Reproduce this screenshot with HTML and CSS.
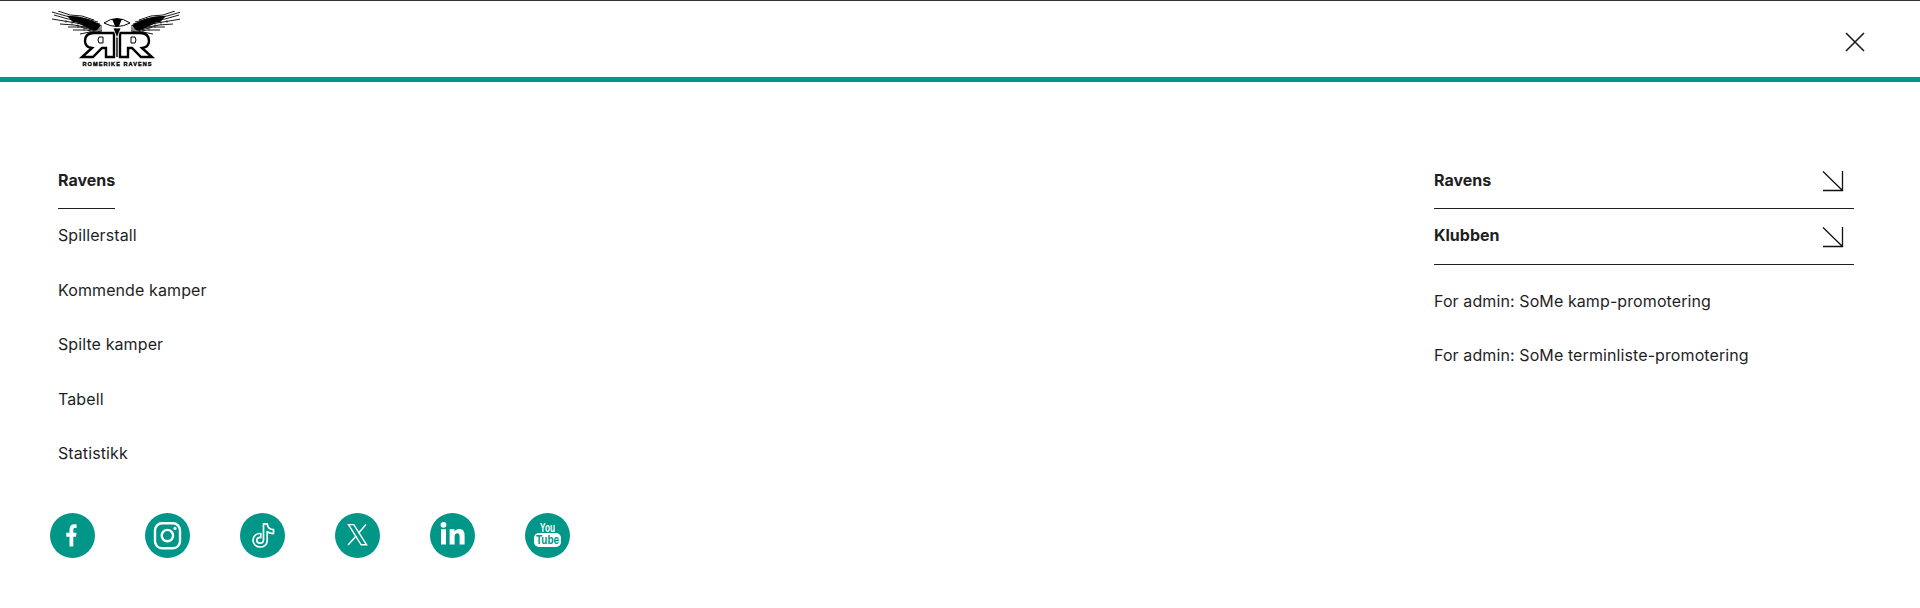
FILE: index.html
```html
<!DOCTYPE html>
<html lang="no">
<head>
<meta charset="utf-8">
<title>Romerike Ravens</title>
<link rel="stylesheet" href="styles.css">
</head>
<body>
<header class="header">
  <a class="logo" href="#" aria-label="Romerike Ravens">
    <svg class="logo-svg" viewBox="0 0 128 56" width="128" height="56" fill="none" stroke="#000">
      <defs>
        <g id="wing">
          <g stroke-width="0.9">
            <path d="M0 1 L14 5 L30 7 L46 11"/>
            <path d="M2 4 L16 8 L34 10 L48 13"/>
            <path d="M0 8 L18 11 L36 14 L50 15"/>
            <path d="M8 13 L22 14 L38 17 L50 17"/>
            <path d="M16 16 L28 16 L40 19 L50 19"/>
            <path d="M21 19 L34 19 L44 21 L50 20"/>
            <path d="M28 23 L38 21 L46 22"/>
            <path d="M33 26 L40 23 L48 23"/>
            <path d="M6 0 L18 4 L30 5 L42 9"/>
            <path d="M14 9 L14 12 M20 8 L20 14 M26 10 L26 17 M32 11 L32 20 M38 14 L38 22 M44 16 L44 22" stroke-width="0.6"/>
          </g>
          <path d="M15 5 Q32 4 49 14 L46 18 Q30 12 21 11 Z" fill="#000" stroke="none"/>
          <path d="M25 12 Q38 13 47 18 L42 20 Q34 16 25 12 Z" fill="#000" stroke="none"/>
        </g>
      </defs>
      <use href="#wing"/>
      <use href="#wing" transform="translate(129 0) scale(-1 1)"/>
      <path d="M52 12 Q65 3 78 12 Q65 19 52 12 Z" stroke-width="1"/>
      <path d="M60 8 L70 8 L67 15 L63 15 Z" fill="#000" stroke="none"/>
      <path class="letter" d="M62 46 L62 22 L42 22 Q33 22 33 30 Q33 36 40 37 L30 46 L41 46 L50 37 L54 37 L54 46 Z" fill="#fff" stroke-width="2.4"/>
      <path class="letter" d="M68 46 L68 22 L88 22 Q97 22 97 30 Q97 36 90 37 L100 46 L89 46 L80 37 L76 37 L76 46 Z" fill="#fff" stroke-width="2.4"/>
      <path d="M51 26 L47 26 Q45 29 47 32 L51 32 Z M79 26 L83 26 Q85 29 83 32 L79 32 Z" stroke-width="1"/>
      <path d="M65 22 L65 46" stroke-width="1.4"/>
      <path d="M61 17 L65 27 L69 17 Z" fill="#000" stroke="#fff" stroke-width="0.8"/>
      <text class="logo-text" x="65" y="54.5" text-anchor="middle" textLength="69" lengthAdjust="spacing" fill="#000" stroke="#000" stroke-width="0.35">ROMERIKE RAVENS</text>
    </svg>
  </a>
  <button class="close" aria-label="Lukk">
    <svg viewBox="0 0 20 20" width="20" height="20" fill="none" stroke="#1a1a1a" stroke-width="1.6">
      <path d="M1 1 L19 19 M19 1 L1 19"/>
    </svg>
  </button>
</header>

<main class="main">
  <div class="left">
    <nav class="menu">
      <h2 class="menu-title"><span class="menu-title-text">Ravens</span></h2>
      <a class="menu-link" href="#">Spillerstall</a>
      <a class="menu-link" href="#">Kommende kamper</a>
      <a class="menu-link" href="#">Spilte kamper</a>
      <a class="menu-link" href="#">Tabell</a>
      <a class="menu-link" href="#">Statistikk</a>
    </nav>
    <div class="socials">
      <a class="social" href="#" aria-label="Facebook">
        <svg viewBox="0 0 45 45" width="45" height="45"><circle cx="22.5" cy="22.5" r="22.5" fill="#009688"/><path d="M19.5 33.5 V23.8 H16.3 V19.8 H19.5 V16.6 C19.5 13 21.5 11.2 24.3 11.2 C25.5 11.2 26.2 11.3 26.6 11.4 V15 H24.9 C23.5 15 23.3 15.8 23.3 17 V19.8 H26.5 L26 23.8 H23.3 V33.5 Z" fill="#fff"/></svg>
      </a>
      <a class="social" href="#" aria-label="Instagram">
        <svg viewBox="0 0 45 45" width="45" height="45" fill="none" stroke="#fff"><circle cx="22.5" cy="22.5" r="22.5" fill="#009688" stroke="none"/><rect x="10" y="10.3" width="25" height="25" rx="7" stroke-width="2.4"/><circle cx="22.4" cy="22.6" r="5.7" stroke-width="2.4"/><circle cx="30" cy="15.4" r="1.6" fill="#fff" stroke="none"/></svg>
      </a>
      <a class="social" href="#" aria-label="TikTok">
        <svg viewBox="0 0 45 45" width="45" height="45" fill="none" stroke="#fff"><circle cx="22.5" cy="22.5" r="22.5" fill="#009688" stroke="none"/><path d="M23.5 10.8 H27.2 C27.6 14 30 16.4 33.5 16.6 V20.6 C30.8 20.6 28.8 19.8 27.2 18.6 V27.4 C27.2 31.6 23.8 34 20.3 34 C16.2 34 13 31 13 27.2 C13 23 16.6 20 20.8 20.6 V24.6 C18.6 24 16.8 25.4 16.8 27.2 C16.8 29 18.4 30.2 20.2 30.2 C22 30.2 23.5 29 23.5 26.8 Z" stroke-width="1.7" stroke-linejoin="round"/></svg>
      </a>
      <a class="social" href="#" aria-label="X">
        <svg viewBox="0 0 45 45" width="45" height="45" fill="none" stroke="#fff"><circle cx="22.5" cy="22.5" r="22.5" fill="#009688" stroke="none"/><path d="M13.5 11.6 H18.8 L31.6 31.8 H26.2 Z" stroke-width="1.4"/><path d="M31 11.4 L23.4 20.2 M21.2 23 L13 32" stroke-width="1.5"/></svg>
      </a>
      <a class="social" href="#" aria-label="LinkedIn">
        <svg viewBox="0 0 45 45" width="45" height="45"><circle cx="22.5" cy="22.5" r="22.5" fill="#009688"/><circle cx="13.5" cy="11.8" r="2.9" fill="#fff"/><path d="M11 16.3 H16 V31.4 H11 Z M19.6 16.3 H24.4 V18.4 C25.3 17 27 15.9 29.3 15.9 C33.2 15.9 34.6 18.4 34.6 22.4 V31.4 H29.6 V23.4 C29.6 21.6 29.1 20.2 27.3 20.2 C25.4 20.2 24.6 21.6 24.6 23.4 V31.4 H19.6 Z" fill="#fff"/></svg>
      </a>
      <a class="social" href="#" aria-label="YouTube">
        <svg viewBox="0 0 45 45" width="45" height="45"><circle cx="22.5" cy="22.5" r="22.5" fill="#009688"/><text class="yt-you" x="22.5" y="18.6" text-anchor="middle" textLength="15" lengthAdjust="spacingAndGlyphs" fill="#fff">You</text><rect x="9" y="20" width="27" height="14" rx="5" fill="#fff"/><text class="yt-tube" x="22.5" y="31.3" text-anchor="middle" textLength="23" lengthAdjust="spacingAndGlyphs" fill="#009688">Tube</text></svg>
      </a>
    </div>
  </div>

  <aside class="side">
    <a class="side-row" href="#">
      <span class="side-title">Ravens</span>
      <svg class="arrow" viewBox="0 0 22 22" width="22" height="22" fill="none" stroke="#111" stroke-width="1.3"><path d="M1 1.5 L20.5 20.5 M20.5 1 V20.5 H1"/></svg>
    </a>
    <a class="side-row" href="#">
      <span class="side-title">Klubben</span>
      <svg class="arrow" viewBox="0 0 22 22" width="22" height="22" fill="none" stroke="#111" stroke-width="1.3"><path d="M1 1.5 L20.5 20.5 M20.5 1 V20.5 H1"/></svg>
    </a>
    <a class="side-link" href="#">For admin: SoMe kamp-promotering</a>
    <a class="side-link" href="#">For admin: SoMe terminliste-promotering</a>
  </aside>
</main>
</body>
</html>
```

FILE: styles.css
```css
* { box-sizing: border-box; }

html, body {
  margin: 0;
  padding: 0;
  height: 100%;
  background: #fff;
}

body {
  font-family: "Inter", "Liberation Sans", sans-serif;
  font-size: 16px;
  letter-spacing: 0.1px;
  color: #1f1f1f;
  overflow: hidden;
}

a { color: inherit; text-decoration: none; }

.header {
  display: flex;
  align-items: center;
  justify-content: space-between;
  height: 82px;
  padding: 0 35px 0 52px;
  border-top: 1px solid #333;
  border-bottom: 5px solid #009688;
}

.logo { display: block; height: 56px; margin-top: -1px; }
.logo-svg { display: block; }
.logo-text { font-family: "Liberation Sans", sans-serif; font-weight: 700; font-size: 5.6px; letter-spacing: 0; }

.close {
  display: flex;
  width: 60px;
  height: 40px;
  margin-top: 6px;
  align-items: center;
  justify-content: center;
  padding: 0;
  border: 0;
  background: none;
}

.main {
  display: flex;
  justify-content: space-between;
  padding: 82px 66px 0 50px;
}

.menu { padding-left: 8px; }

.menu-title {
  margin: 0;
  font-size: 16px;
  font-weight: 700;
  letter-spacing: 0;
  line-height: 32px;
}

.menu-title-text {
  display: inline-block;
  height: 45px;
  border-bottom: 1px solid #1f1f1f;
}

.menu-link {
  display: block;
  height: 54.5px;
  line-height: 52px;
}

.socials {
  display: flex;
  gap: 50px;
  margin-top: 31.5px;
}

.social { display: block; width: 45px; height: 45px; }
.social svg { display: block; }

.yt-you { font-family: "Liberation Sans", sans-serif; font-weight: 700; font-size: 12px; letter-spacing: 0; }
.yt-tube { font-family: "Liberation Sans", sans-serif; font-weight: 700; font-size: 12px; letter-spacing: 0; }

.side {
  display: flex;
  flex-direction: column;
  width: 420px;
}

.side-row {
  display: flex;
  align-items: center;
  justify-content: space-between;
  height: 45px;
  padding: 0 10px 13px 0;
  border-bottom: 1px solid #1f1f1f;
}

.side-row + .side-row {
  height: 56px;
  padding-top: 10px;
}

.side-title { font-weight: 700; letter-spacing: 0; }
.arrow { margin-top: 3px; flex: none; }

.side-link {
  display: block;
  height: 54px;
  line-height: 52px;
}

.side-row + .side-link { margin-top: 10px; }
```
